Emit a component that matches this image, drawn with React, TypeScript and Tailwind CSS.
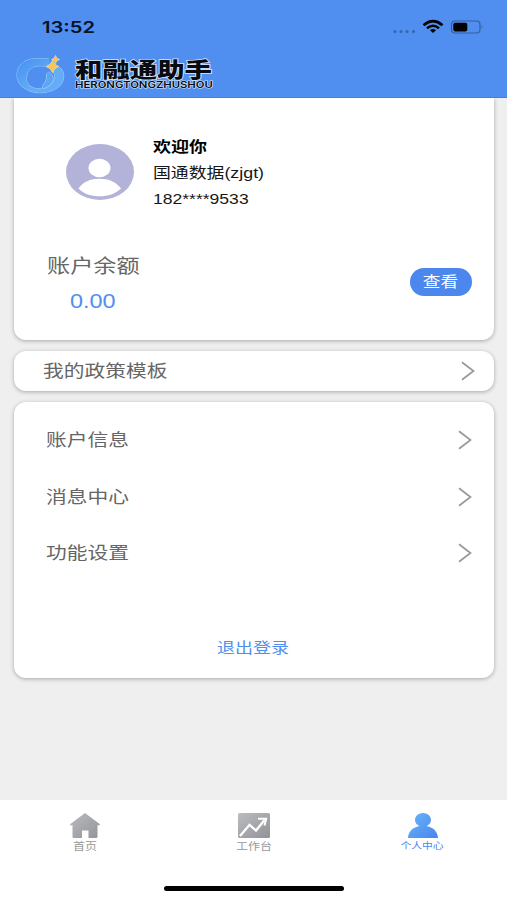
import type { ReactNode } from 'react';

function Wide({ children, className = 'scale-x-[1.22]' }: { children: ReactNode; className?: string }) {
  return <span className={`block w-fit whitespace-nowrap ${className}`}>{children}</span>;
}

function Chevron() {
  return (
    <svg width="14" height="20" viewBox="0 0 14 20" fill="none" stroke="#999" strokeWidth="1.700">
      <path d="M1 1.200 12.500 10 1 18.800" />
    </svg>
  );
}

function StatusBar() {
  return (
    <div className="flex h-[54px] items-center justify-between pl-[42px] pr-[23px]">
      <Wide className="origin-left scale-x-[1.26] font-[Inter] text-[16px] font-semibold leading-5 text-[#071225]">13:52</Wide>
      <svg width="92" height="18" viewBox="0 0 92 18">
        <g fill="#3564b1">
          <circle cx="3" cy="13.500" r="1.500" />
          <circle cx="9" cy="13.500" r="1.500" />
          <circle cx="15" cy="13.500" r="1.500" />
          <circle cx="21.500" cy="13.500" r="1.500" />
        </g>
        <g fill="none" stroke="#000">
          <path d="M31.500 7.200Q41 -.8 50.500 7.200" strokeWidth="2.700" />
          <path d="M35 10.200Q41 5.400 47 10.200" strokeWidth="2.500" />
        </g>
        <path d="M38 12.200Q41 10 44 12.200L41 14.900Z" fill="#000" />
        <rect x="59.500" y="3" width="28.500" height="12" rx="3.500" fill="none" stroke="#345f9f" strokeWidth="1.200" />
        <rect x="61.300" y="4.700" width="14" height="8.700" rx="1.800" fill="#000" />
        <path d="M89.700 7Q91.500 9 89.700 11Z" fill="#345f9f" />
      </svg>
    </div>
  );
}

function Emblem() {
  return (
    <svg width="52" height="42" viewBox="0 0 52 42">
      <defs>
        <linearGradient id="ring" x1="0" y1="0" x2="1" y2="1">
          <stop offset="0" stopColor="#4690f2" />
          <stop offset=".6" stopColor="#62adf5" />
          <stop offset="1" stopColor="#62adfa" />
        </linearGradient>
      </defs>
      <path
        d="M34 5C28 4.300 22 4.300 17 5C8 6.500 2 13 2 21C2 31 12 38.700 25 38.700C38 38.700 48.700 32 48.700 22C48.700 18 46.500 14.500 43 12.500L36 14C40 17.500 41 24 38 28.500C35.500 32.500 28.500 35 22 34.700C15 34.300 10.500 29.500 11.300 23.500C12 17 16 12.600 22 12C27 11.500 32 12 35 14"
        fill="url(#ring)"
        stroke="#92caff"
        strokeWidth="1.100"
      />
      <path d="M34 18C40 22 40 30.500 28.500 34.500C25 32 33 28 31.500 22C31.300 20 32.500 18.500 34 18Z" fill="#5fa5f5" stroke="#b0dbff" strokeWidth="1" />
      <path d="M37.500 6.500Q39 11 43.500 12.500Q39 14 37.500 18.500Q36 14 31.500 12.500Q36 11 37.500 6.500Z" fill="#ffc451" stroke="#fff0bf" strokeWidth=".8" />
      <path d="M40.500 1.500Q41.300 4.700 44.500 5.500Q41.300 6.300 40.500 9.500Q39.700 6.300 36.500 5.500Q39.700 4.700 40.500 1.500Z" fill="#ffc451" stroke="#fff0bf" strokeWidth=".6" />
    </svg>
  );
}

function Brand() {
  return (
    <div className="flex pl-[15px] text-[#080b12] [-webkit-text-stroke:1.500px_#dce8f6] [paint-order:stroke_fill]">
      <Emblem />
      <div className="pl-[7.500px] pt-[4px]">
        <Wide className="h-[21px] origin-left scale-x-[1.305] text-[21px] font-extrabold leading-[21px] font-['Noto_Sans_CJK_SC',sans-serif]">
          和融通助手
        </Wide>
        <Wide className="mt-[2px] h-[8px] origin-left scale-x-[1.330] text-[8.500px] font-semibold leading-[8px] font-[Inter] [-webkit-text-stroke-width:1px]">
          HERONGTONGZHUSHOU
        </Wide>
      </div>
    </div>
  );
}

function Avatar() {
  return (
    <svg width="68" height="56" viewBox="0 0 68 56">
      <ellipse cx="34" cy="28" rx="34" ry="28" fill="#b3b3da" />
      <ellipse cx="33.500" cy="24" rx="11" ry="9.300" fill="#fff" />
      <path d="M12.500 44.500C17 38 24 34.800 33.500 34.800S50 38 55 44.500C49 50 42 52.300 33.500 52.300S18 50 12.500 44.500Z" fill="#fff" />
    </svg>
  );
}

const card = 'mx-[13.500px] bg-white shadow-[0_1px_4px_rgba(0,0,0,0.3)]';

function HomeIcon() {
  return (
    <svg width="30" height="25" viewBox="0 0 30 25">
      <defs>
        <linearGradient id="grey" x1="0" y1="0" x2="1" y2="1">
          <stop offset="0" stopColor="#bbbcbf" />
          <stop offset="1" stopColor="#929398" />
        </linearGradient>
      </defs>
      <path d="M15 0 30 11.300 29 12.800 27.500 11.800V23.500Q27.500 25 26 25H18.500V17.500H12V25H4Q2.500 25 2.500 23.500V11.800L1 12.800 0 11.300Z" fill="url(#grey)" />
    </svg>
  );
}

function WorkIcon() {
  return (
    <svg width="32" height="25" viewBox="0 0 32 25">
      <rect width="32" height="25" rx="1.500" fill="url(#grey)" />
      <path d="M2 23 11.500 11.800 18 17.500 26.500 7" fill="none" stroke="#fff" strokeWidth="2.300" />
      <path d="M20 5.800H28.200L26.500 12.500" fill="none" stroke="#fff" strokeWidth="2" />
    </svg>
  );
}

function PersonIcon() {
  return (
    <svg width="30" height="25" viewBox="0 0 30 25">
      <defs>
        <linearGradient id="blue" x1="0" y1="0" x2="1" y2="1">
          <stop offset="0" stopColor="#69b7f8" />
          <stop offset="1" stopColor="#4a83ef" />
        </linearGradient>
      </defs>
      <path d="M15 0C10.500 0 7 3 7 7C7 10 9 12 11.500 13C4 14.500 .5 19 0 25H30C29.500 19 26 14.500 18.500 13C21 12 23 10 23 7C23 3 19.500 0 15 0Z" fill="url(#blue)" />
    </svg>
  );
}

const tabs = [
  { label: '首页', icon: <HomeIcon />, style: 'text-[10px] text-[#999]' },
  { label: '工作台', icon: <WorkIcon />, style: 'text-[10px] text-[#999]' },
  { label: '个人中心', icon: <PersonIcon />, style: 'text-[9px] text-[#4c87ef]' },
];

export default function App() {
  return (
    <div className="flex h-[900px] w-[507px] flex-col overflow-hidden bg-[#efefef] font-['Liberation_Sans','Noto_Sans_CJK_SC',sans-serif]">
      <header className="z-10 h-[98px] shrink-0 border-b border-[#477edb] bg-[#508eef]">
        <StatusBar />
        <Brand />
      </header>

      <main className="flex h-[702px] shrink-0 flex-col">
        <section className={`${card} h-[241.500px] rounded-b-[12px]`}>
          <div className="flex pl-[52px] pt-[36px]">
            <div className="pt-[10px]">
              <Avatar />
            </div>
            <div className="pl-[19.500px] text-[15px] leading-[26px] text-[#171717]">
              <Wide className="origin-left scale-x-[1.2] font-bold text-black">欢迎你</Wide>
              <Wide className="origin-left scale-x-[1.190]">国通数据(zjgt)</Wide>
              <Wide className="origin-left scale-x-[1.170]">182****9533</Wide>
            </div>
          </div>
          <div className="mt-[38px] flex items-start justify-between pl-[33px] pr-[22px]">
            <div>
              <Wide className="origin-left scale-x-[1.220] text-[19px] leading-[34px] text-[#666]">账户余额</Wide>
              <Wide className="ml-[23.500px] origin-left scale-x-[1.200] text-[19.500px] leading-[34px] text-[#508eef]">0.00</Wide>
            </div>
            <button className="mt-[18px] flex h-[28px] w-[62px] items-center justify-center rounded-full bg-[#4b87ed] pt-[2px] text-[14.500px] text-white">
              <Wide>查看</Wide>
            </button>
          </div>
        </section>

        <section className={`${card} mt-[11px] flex h-[40px] items-center justify-between rounded-[12px] pl-[29px] pr-[19px] text-[17px] text-[#666]`}>
          <Wide className="origin-left scale-x-[1.220] pt-[2px]">我的政策模板</Wide>
          <Chevron />
        </section>

        <section className={`${card} mt-[11.500px] h-[276px] rounded-[12px] pt-[10px]`}>
          {['账户信息', '消息中心', '功能设置'].map((item) => (
            <div key={item} className="flex h-[56.500px] items-center justify-between pl-[32.500px] pr-[21.500px] text-[17px] text-[#666]">
              <Wide className="origin-left scale-x-[1.220] pt-[1px]">{item}</Wide>
              <Chevron />
            </div>
          ))}
          <button className="mx-auto mt-[54px] block text-[15px] leading-[24px] text-[#508eef]">
            <Wide className="scale-x-[1.200]">退出登录</Wide>
          </button>
        </section>
      </main>

      <footer className="flex h-[100px] shrink-0 flex-col items-center justify-between bg-white pb-[9px] pt-[13px]">
        <nav className="grid w-full grid-cols-3">
          {tabs.map((tab) => (
            <div key={tab.label} className="flex flex-col items-center">
              {tab.icon}
              <Wide className={`scale-x-[1.200] leading-[17px] ${tab.style}`}>{tab.label}</Wide>
            </div>
          ))}
        </nav>
        <div className="h-[5px] w-[180px] rounded-full bg-black" />
      </footer>
    </div>
  );
}
